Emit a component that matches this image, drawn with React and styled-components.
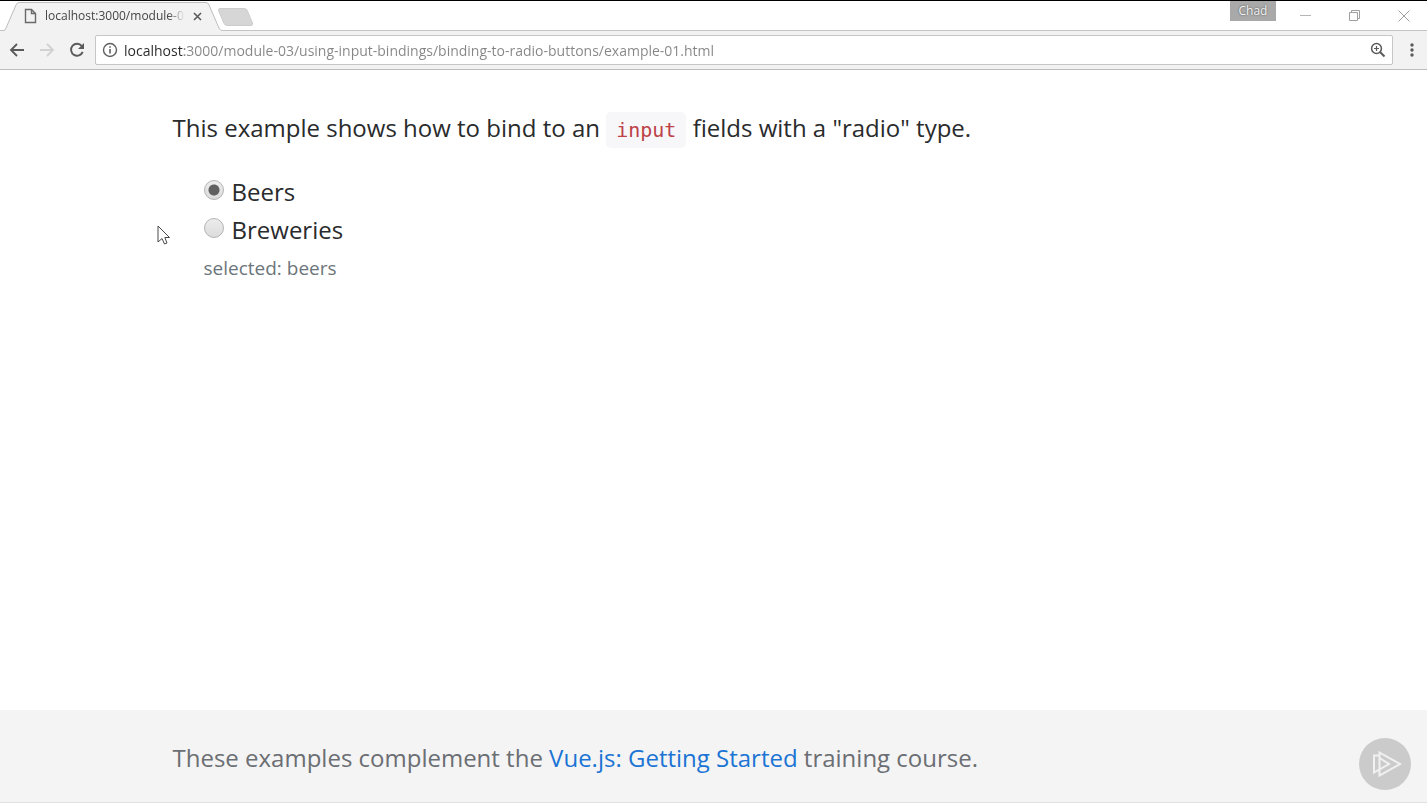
import React, { useState } from "react";
import styled, { createGlobalStyle } from "styled-components";

const sans = '"Open Sans", "Noto Sans", sans-serif';

const GlobalStyle = createGlobalStyle`
  *, *::before, *::after { box-sizing: border-box; }
  body { margin: 0; background: #fff; font-family: ${sans}; color: #292b2c; }
  button { padding: 0; border: 0; background: none; font: inherit; cursor: pointer; }
  svg { display: block; }
`;

const Window = styled.div`
  display: flex;
  flex-direction: column;
  min-height: 100vh;
  border-top: 1px solid #000;
`;

const TabStrip = styled.header`
  display: flex;
  justify-content: space-between;
  height: 30px;
  background: linear-gradient(#c4c4c4, #c4c4c4) bottom / 100% 1px no-repeat #fff;
`;

const Tabs = styled.div`
  display: flex;
  padding-left: 4px;
`;

const Tab = styled.div`
  position: relative;
  display: flex;
  align-items: center;
  gap: 8px;
  width: 218px;
  padding: 0 20px;
`;

const TabShape = styled.svg`
  position: absolute;
  inset: 0;
`;

const TabIcon = styled.svg`
  position: relative;
  flex: none;
`;

const TabTitle = styled.span`
  position: relative;
  flex: 1;
  overflow: hidden;
  white-space: nowrap;
  font-size: 12px;
  line-height: 18px;
  color: #444;
  mask-image: linear-gradient(to right, #000 88%, transparent);
`;

const TabClose = styled.button`
  position: relative;
`;

const NewTab = styled.button`
  align-self: center;
  margin: 2px 0 0 -4px;
`;

const WindowControls = styled.div`
  display: flex;
  align-items: flex-start;
  gap: 2px;
`;

const Profile = styled.button`
  && {
    width: 46px;
    height: 20px;
    margin-right: 4px;
    background: #a9a9a9;
    color: #f4f4f4;
    font-size: 12px;
    line-height: 18px;
    text-shadow: 0 0 2px #444;
  }
`;

const ControlButton = styled.button`
  && {
    display: grid;
    place-items: center;
    width: 47px;
    height: 29px;
  }
`;

const Toolbar = styled.nav`
  display: flex;
  align-items: center;
  height: 39px;
  padding: 0 8px 0 9px;
  background: #f2f2f2;
  border-bottom: 1px solid #bdbdbd;
`;

const NavButtons = styled.div`
  display: flex;
  gap: 14px;
  margin-right: 10px;
`;

const AddressBar = styled.div`
  flex: 1;
  display: flex;
  align-items: center;
  gap: 6px;
  height: 30px;
  padding: 0 6px;
  background: #fff;
  border: 1px solid #c6c6c6;
  border-radius: 2px;
`;

const Address = styled.input`
  flex: 1;
  min-width: 0;
  height: 24px;
  padding: 0;
  border: 0;
  outline: 0;
  font-family: ${sans};
  font-size: 14px;
  color: transparent;
  background: linear-gradient(to right, #292929 60px, #858585 60px);
  background-clip: text;
`;

const MenuButton = styled.button`
  margin-left: 10px;
`;

const Container = styled.div`
  width: min(100% - 32px, 1082px);
  margin: 0 auto;
`;

const Main = styled.main`
  flex: 1;
  padding-top: 39px;
`;

const Intro = styled.p`
  margin: 0;
  font-size: 24px;
  line-height: 38px;
`;

const Code = styled.code`
  padding: 6px 10px;
  border-radius: 5px;
  background: #f7f7f9;
  color: #bd4147;
  font-family: "DejaVu Sans Mono", monospace;
  font-size: 20px;
`;

const Choices = styled.fieldset`
  margin: 24px 0 0;
  padding: 0 0 0 31px;
  border: 0;
`;

const Choice = styled.label`
  display: flex;
  align-items: center;
  gap: 8px;
  font-size: 24px;
  line-height: 38px;
`;

const Radio = styled.input.attrs({ type: "radio" })`
  appearance: none;
  width: 20px;
  height: 20px;
  margin: 0 0 4px;
  border: 1px solid #b4b4b4;
  border-radius: 50%;
  background: linear-gradient(#ececec, #dcdcdc);
  &:checked {
    background: radial-gradient(circle, #606060 5px, transparent 6px), linear-gradient(#ececec, #dcdcdc);
  }
`;

const Selected = styled.output`
  display: block;
  padding-top: 4px;
  font-size: 19px;
  line-height: 30px;
  color: #6c757b;
`;

const Footer = styled.footer`
  display: flex;
  align-items: center;
  position: relative;
  height: 93px;
  padding-top: 4px;
  background: #f4f4f4;
  border-bottom: 1px solid #e2e2e2;
`;

const FooterText = styled.p`
  margin: 0;
  font-size: 24px;
  line-height: 38px;
  color: #6b6e73;
`;

const Link = styled.a`
  color: #1b74d4;
  text-decoration: none;
`;

const Watermark = styled.svg`
  position: absolute;
  right: 16px;
  bottom: 12px;
`;

const Pointer = styled.svg`
  position: absolute;
  left: 157px;
  top: 225px;
`;

const OPTIONS = ["Beers", "Breweries"];

export default function App() {
  const [selected, setSelected] = useState("beers");
  return (
    <Window>
      <GlobalStyle />
      <TabStrip>
        <Tabs>
          <Tab>
            <TabShape width="218" height="30" fill="#f2f2f2" stroke="#bdbdbd">
              <path d="M0 29.500Q1 29.500 2 27L12 4Q13 1.500 15 1.500H202Q204 1.500 205 4L215 27Q216 29.500 218 29.500" />
              <path d="M1 29.500H217" stroke="#f2f2f2" />
            </TabShape>
            <TabIcon width="13" height="16" fill="none" stroke="#6a6a6a" strokeWidth="1.400">
              <path d="M1.500 1.500H7.500L11.500 5.500V14.500H1.500ZM7.500 1.500V5.500H11.500" />
            </TabIcon>
            <TabTitle>localhost:3000/module-0</TabTitle>
            <TabClose aria-label="Close tab">
              <svg width="9" height="9" stroke="#5a5a5a" strokeWidth="1.600">
                <path d="M1 1L8 8M8 1L1 8" />
              </svg>
            </TabClose>
          </Tab>
          <NewTab aria-label="New tab">
            <svg width="36" height="18" fill="#d6d6d6" stroke="#cccccc">
              <path d="M2 .5H26Q28 .5 29 2L34.500 15Q35 17.500 33 17.500H9Q7 17.500 6 15.500L.5 2.500Q0 .5 2 .5Z" />
            </svg>
          </NewTab>
        </Tabs>
        <WindowControls>
          <Profile>Chad</Profile>
          <ControlButton aria-label="Minimize">
            <svg width="11" height="11" stroke="#b5b5b5"><path d="M0 5.500H11" /></svg>
          </ControlButton>
          <ControlButton aria-label="Restore">
            <svg width="11" height="11" fill="none" stroke="#a0a0a0">
              <path d="M.5 2.500H8.500V10.500H.5ZM2.500 2.500V.5H10.500V8.500H8.500" />
            </svg>
          </ControlButton>
          <ControlButton aria-label="Close">
            <svg width="12" height="12" stroke="#a0a0a0"><path d="M.5 .5L11.500 11.500M11.500 .5L.5 11.500" /></svg>
          </ControlButton>
        </WindowControls>
      </TabStrip>
      <Toolbar>
        <NavButtons>
          <button aria-label="Back">
            <svg width="16" height="16" fill="none" stroke="#5a5a5a" strokeWidth="1.800">
              <path d="M15 8H2M8 2L2 8L8 14" />
            </svg>
          </button>
          <button aria-label="Forward">
            <svg width="16" height="16" fill="none" stroke="#d2d2d2" strokeWidth="1.800">
              <path d="M1 8H14M8 2L14 8L8 14" />
            </svg>
          </button>
          <button aria-label="Reload">
            <svg width="16" height="16" fill="none" stroke="#5a5a5a" strokeWidth="1.900">
              <path d="M12.800 4A6 6 0 1 0 13.700 9.800" />
              <path d="M15 1V7H9Z" fill="#5a5a5a" stroke="none" />
            </svg>
          </button>
        </NavButtons>
        <AddressBar>
          <svg width="16" height="16" fill="none" stroke="#5f5f5f" strokeWidth="1.400">
            <circle cx="8" cy="8" r="6.500" />
            <path d="M8 7V11.500M8 4.300V5.800" strokeWidth="1.600" />
          </svg>
          <Address
            aria-label="Address"
            defaultValue="localhost:3000/module-03/using-input-bindings/binding-to-radio-buttons/example-01.html"
          />
          <button aria-label="Zoom">
            <svg width="16" height="16" fill="none" stroke="#5a5a5a" strokeWidth="1.500">
              <circle cx="6.500" cy="6.500" r="4.900" />
              <path d="M4 6.500H9M6.500 4V9" strokeWidth="1.200" />
              <path d="M10 10L14.500 14.500" strokeWidth="2" />
            </svg>
          </button>
        </AddressBar>
        <MenuButton aria-label="Menu">
          <svg width="16" height="16" fill="#5a5a5a">
            <circle cx="9" cy="3" r="1.700" />
            <circle cx="9" cy="8" r="1.700" />
            <circle cx="9" cy="13" r="1.700" />
          </svg>
        </MenuButton>
      </Toolbar>
      <Main>
        <Container>
          <Intro>
            This example shows how to bind to an <Code>input</Code> fields with a "radio" type.
          </Intro>
          <Choices aria-label="Category">
            {OPTIONS.map((name) => (
              <Choice key={name}>
                <Radio
                  name="category"
                  checked={selected === name.toLowerCase()}
                  onChange={() => setSelected(name.toLowerCase())}
                />
                {name}
              </Choice>
            ))}
            <Selected>selected: {selected}</Selected>
          </Choices>
        </Container>
      </Main>
      <Footer>
        <Container>
          <FooterText>
            These examples complement the <Link href="#course">Vue.js: Getting Started</Link> training course.
          </FooterText>
        </Container>
        <Watermark width="52" height="52" fill="none" stroke="#f1f1f1" strokeWidth="2">
          <circle cx="26" cy="26" r="26" fill="#cbcbcb" stroke="none" />
          <path d="M20.500 14.500L41 26L20.500 37.500Z" />
          <path d="M20 17.500L15 17.500V34.500L30 26L20.500 20" />
        </Watermark>
      </Footer>
      <Pointer width="14" height="20" fill="#fff" stroke="#4a4a4a">
        <path d="M1 1V17L5 13.500L7.500 19L10 18L7.800 12.500H12.500Z" />
      </Pointer>
    </Window>
  );
}
